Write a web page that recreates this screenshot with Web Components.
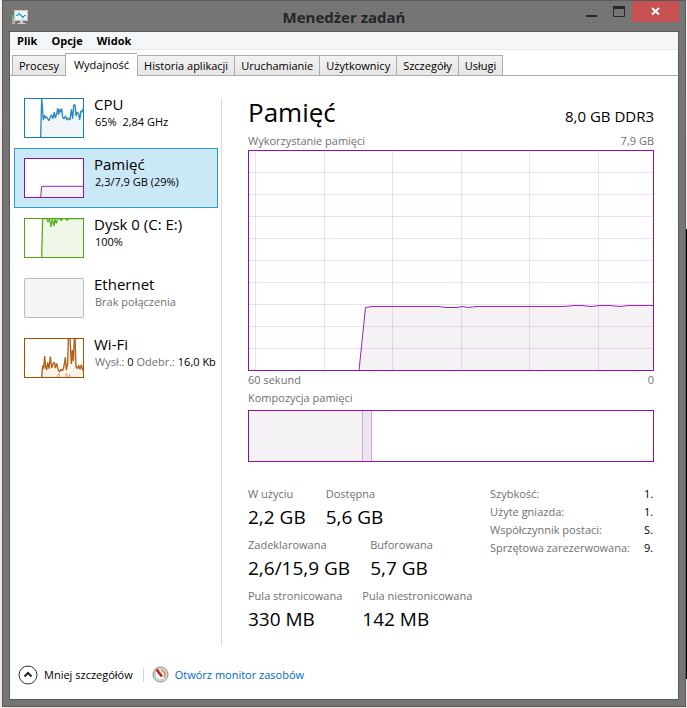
<!DOCTYPE html>
<html lang="pl">
<head>
<meta charset="utf-8">
<title>Menedżer zadań</title>
<style>
  html { height: 100%; }
  body {
    margin: 0; min-height: 100%; display: flex; box-sizing: border-box; padding: 0 1px 1px 2px;
    font-family: "Open Sans", "Noto Sans", sans-serif; font-size: 11px; color: #000;
    background:
      linear-gradient(#000, #000) right 229px / 1px 450px no-repeat fixed,
      linear-gradient(#f7efed, #f3e6e4) fixed;
    background-position: right 0 top 229px, 0 0;
    background-size: 1px 450px, auto;
    background-repeat: no-repeat, repeat;
    --muted: #707070; --accent: #8b12ae; --line: #acacac;
  }
</style>
</head>
<body>
<tm-window>
  <tm-titlebar slot="title">Menedżer zadań</tm-titlebar>
  <tm-menu slot="menu"></tm-menu>
  <tm-tabs slot="tabs">
    <tm-tab>Procesy</tm-tab><tm-tab selected>Wydajność</tm-tab><tm-tab>Historia aplikacji</tm-tab><tm-tab>Uruchamianie</tm-tab><tm-tab>Użytkownicy</tm-tab><tm-tab>Szczegóły</tm-tab><tm-tab>Usługi</tm-tab>
  </tm-tabs>
  <tm-sidebar slot="side">
    <tm-resource kind="cpu">CPU<span slot="sub">65% &nbsp;2,84 GHz</span></tm-resource>
    <tm-resource kind="mem" selected>Pamięć<span slot="sub">2,3/7,9 GB (29%)</span></tm-resource>
    <tm-resource kind="disk">Dysk 0 (C: E:)<span slot="sub">100%</span></tm-resource>
    <tm-resource kind="eth">Ethernet<span slot="sub" style="color:var(--muted)">Brak połączenia</span></tm-resource>
    <tm-resource kind="wifi">Wi-Fi<span slot="sub"><span style="color:var(--muted)">Wysł.:</span> 0 <span style="color:var(--muted)">Odebr.:</span> 16,0 Kb</span></tm-resource>
  </tm-sidebar>
  <tm-memory slot="main"></tm-memory>
  <tm-footer slot="footer"></tm-footer>
</tm-window>

<script>
const define = (name, html, setup) => {
  const tpl = document.createElement('template');
  tpl.innerHTML = html;
  customElements.define(name, class extends HTMLElement {
    constructor() {
      super();
      this.attachShadow({ mode: 'open' }).append(tpl.content.cloneNode(true));
    }
    connectedCallback() { if (setup) setup(this, this.shadowRoot); }
  });
};

define('tm-window', `
<style>
  :host { flex: 1; min-width: 0; display: flex; flex-direction: column; box-sizing: border-box;
    background: #757575; border: 1px solid #5a5a5a; padding: 0 6px 6px; }
  .client { flex: 1; display: flex; flex-direction: column; background: #fff; border: 1px solid #5a5a5a; }
  .body { flex: 1; display: grid; grid-template-columns: 212px minmax(0, 1fr); }
</style>
<slot name="title"></slot>
<div class="client">
  <slot name="menu"></slot>
  <slot name="tabs"></slot>
  <div class="body"><slot name="side"></slot><slot name="main"></slot></div>
  <slot name="footer"></slot>
</div>`);

define('tm-titlebar', `
<style>
  :host { display: grid; grid-template-columns: 1fr auto 1fr; height: 30px; color: #262626; }
  .icon { margin: 8px 0 0 2px; }
  h1 { margin: 0; padding-top: 5px; font-size: 15px; line-height: 22px; font-weight: 700; }
  .controls { display: flex; justify-content: flex-end; align-items: flex-start; }
  button { border: 0; padding: 0; background: none; width: 27px; height: 21px; color: #262626; }
  .close { width: 47px; background: #c75050; color: #fff; }
  svg { display: block; margin: 0 auto; }
  .icon svg { margin: 0; }
</style>
<div class="icon"><svg width="18" height="17" viewBox="0 0 18 17">
  <path d="M1 6h3v9H1z" fill="#b9b9b9"/><path d="M2 7v7" stroke="#8b8b8b"/><path d="M1 7h2" stroke="#1fd32b" stroke-width="2"/>
  <rect x="3.500" y="1.500" width="13" height="10" fill="#e9e9e7" stroke="#c9c9c5"/>
  <rect x="5" y="3" width="10" height="7" fill="#eefaff"/>
  <path d="M5 6.500h1.500l1.500-2 2 2 2 2 1.500-2H15" fill="none" stroke="#2596c9" stroke-width="1.200"/>
  <path d="M9 12h3v2h2l1 1H6l1-1h2z" fill="#cfcfcc"/></svg></div>
<h1><slot></slot></h1>
<div class="controls">
  <button aria-label="Minimalizuj"><svg width="11" height="16" viewBox="0 0 11 16"><path d="M0 11h11v2H0z" fill="#262626"/></svg></button>
  <button aria-label="Maksymalizuj"><svg width="12" height="16" viewBox="0 0 12 16"><path d="M.5 3v9.500h11V3" fill="none" stroke="#262626"/><path d="M0 2h12v3H0z" fill="#262626"/></svg></button>
  <button class="close" aria-label="Zamknij"><svg width="9" height="9" viewBox="0 0 9 9"><path d="M1 1l7 6.500M8 1L1 7.500" stroke="#fff" stroke-width="2"/></svg></button>
</div>`);

define('tm-menu', `
<style>
  :host { display: flex; gap: 14px; padding: 0 7px; height: 17px; background: #f5f6f7; border-bottom: 1px solid #e8e8e8; }
  button { border: 0; padding: 0; background: none; font: 700 11px/18px "Open Sans", "Noto Sans", sans-serif; color: #000; }
</style>
<button>Plik</button><button>Opcje</button><button>Widok</button>`);

define('tm-tabs', `
<style>
  :host { display: flex; align-items: flex-end; height: 26px; padding-left: 2px; background: linear-gradient(var(--line), var(--line)) 0 100% / 100% 1px no-repeat; }
</style>
<slot></slot>`, el => el.setAttribute('role', 'tablist'));

define('tm-tab', `
<style>
  :host { display: block; }
  button { box-sizing: border-box; height: 21px; padding: 0 6px; border: 1px solid var(--line); border-right-width: 0;
    background: linear-gradient(#f2f2f2, #e6e6e6); font: inherit; line-height: 20px; color: #000; display: block; white-space: nowrap; }
  :host(:last-of-type) button { border-right-width: 1px; }
  :host([selected]) button { height: 23px; padding: 0 8px; background: #fff; border-bottom: 0; }
</style>
<button role="tab"><slot></slot></button>`);

define('tm-sidebar', `
<style>
  :host { display: flex; min-width: 0; }
  nav { flex: 1; min-width: 0; padding: 12px 0 0 4px; }
  .rule { width: 1px; margin-top: 22px; background: #dcdcdc; }
</style>
<nav><slot></slot></nav><div class="rule"></div>`);

const graphs = {
  cpu: ['#117dbb', '#f1f6fa', 'M50 118L53 0L58 66L61 52L64 60L67 56L71 62L75 68L79 58L83 50L87 62L91 42L94 60L98 48L101 30L104 50L107 34L110 42L113 32L116 58L120 62L125 54L129 66L133 60L138 66L142 34L146 62L149 22L153 20L156 54L160 42L164 48L167 66L171 38L174 42L178 32'],
  mem: ['#8b12ae', '#f4f2f4', 'M50 118L53 85L178 85'],
  disk: ['#4da60c', '#eff7e9', 'M53 118L56 2L68 2L72 12L77 2L81 27L85 2L90 24L93 2L97 16L101 2L108 2L112 8L115 2L126 2L130 7L133 2L178 2'],
  eth: ['#bcbcbc', '#f4f4f4', ''],
  wifi: ['#a74f01', '#fcf3eb', 'M53 118L56 82L59 92L62 54L65 88L68 96L71 73L75 92L79 56L83 90L87 78L91 72L94 90L98 76L102 94L107 102L111 94L116 98L120 84L124 58L127 96L131 76L133 0L138 0L142 78L145 36L148 70L151 0L153 0L156 86L160 92L164 82L168 94L172 80L175 92L178 98']
};
define('tm-resource', `
<style>
  :host { display: block; }
  button { box-sizing: border-box; width: 204px; height: 60px; padding: 0 0 0 9px; border: 1px solid transparent; background: none;
    display: flex; align-items: center; gap: 10px; font: inherit; color: #000; text-align: left; white-space: nowrap; }
  :host([selected]) button { background: #cbe8f6; border-color: #26a0da; }
  svg { flex: none; display: block; }
  .name { display: block; font-size: 15px; line-height: 17px; }
  .sub { display: block; font-size: 11px; line-height: 17px; padding-left: 1px; }
  .text { padding-bottom: 11px; }
</style>
<button><svg width="60" height="40" viewBox="0 0 180 120"></svg><span class="text"><span class="name"><slot></slot></span><span class="sub"><slot name="sub"></slot></span></span></button>`,
(el, root) => {
  const kind = el.getAttribute('kind');
  const [stroke, fill, d] = graphs[kind];
  root.querySelector('svg').innerHTML =
    `<rect x="1.500" y="1.500" width="177" height="117" fill="${kind === 'eth' ? fill : '#fff'}"/>` +
    (d ? `<path d="${d}V118Z" fill="${fill}"/><path d="${d}" fill="none" stroke="${stroke}" stroke-width="${kind === 'mem' ? 3 : 4}" stroke-linejoin="bevel" stroke-opacity=".9"/>` : '') +
    (kind === 'wifi' ? '<path d="M100 118L104 106L108 118M124 118L128 106L131 118M134 118L137 110L140 118" fill="none" stroke="#f0906a" stroke-width="2.500"/>' : '') +
    `<rect x="1.500" y="1.500" width="177" height="117" rx="${kind === 'eth' ? 2 : 0}" fill="none" stroke="${stroke}" stroke-width="3"/>`;
});

define('tm-usage-chart', `
<style>
  :host { display: block; }
  svg { display: block; width: 100%; height: 221px; box-sizing: border-box; }
</style>
<svg viewBox="0 0 406 221" preserveAspectRatio="none" role="img" aria-label="Wykorzystanie pamięci">
  <path d="M111 220.500L117.500 157.500L124 156.500H191L198 157.500H209L214 156.500L220 157.500L228 156.500H316L326 155.500H334L343 156.500L352 155.500H362L372 156.500L380 155.500H405V220.500Z" fill="#f4f2f4"/>
  <path class="grid" fill="none" stroke="#8b12ae" stroke-opacity=".14"/>
  <path d="M111 220.500L117.500 157.500L124 156.500H191L198 157.500H209L214 156.500L220 157.500L228 156.500H316L326 155.500H334L343 156.500L352 155.500H362L372 156.500L380 155.500H405" fill="none" stroke="#9528b6"/>
  <rect x=".5" y=".5" width="405" height="220" fill="none" stroke="#8b12ae"/>
</svg>`, (el, root) => {
  let d = '';
  for (const x of [7, 76, 144, 213, 281, 350]) d += `M${x + .5} 1V220`;
  for (let y = 22; y < 220; y += 22) d += `M1 ${y + .5}H404`;
  root.querySelector('.grid').setAttribute('d', d);
});

define('tm-composition', `
<style>
  :host { display: flex; box-sizing: border-box; height: 52px; border: 1px solid var(--accent); }
  .used { width: 28%; background: #f4f2f4; }
  .modified { box-sizing: border-box; width: 10px; background: #eee6f2; border: solid #c9a9d4; border-width: 0 1px; }
</style>
<div class="used"></div><div class="modified"></div>`);

define('tm-stat', `
<style>
  :host { display: block; white-space: nowrap; }
  .label { font-size: 11px; line-height: 18px; color: var(--muted); }
  .value { font-size: 19px; line-height: 28px; }
</style>
<div class="label"><slot></slot></div><div class="value"><slot name="value"></slot></div>`);

define('tm-specs', `
<style>
  :host { display: block; }
  table { width: 100%; border-collapse: collapse; font-size: 11px; line-height: 18px; }
  th, td { padding: 0; text-align: left; font-weight: 400; white-space: nowrap; }
  th { color: var(--muted); }
  td { width: 10px; }
</style>
<table>
  <tr><th scope="row">Szybkość:</th><td>1.</td></tr>
  <tr><th scope="row">Użyte gniazda:</th><td>1.</td></tr>
  <tr><th scope="row">Współczynnik postaci:</th><td>S.</td></tr>
  <tr><th scope="row">Sprzętowa zarezerwowana:</th><td>9.</td></tr>
</table>`);

define('tm-memory', `
<style>
  :host { display: block; min-width: 0; padding: 18px 24px 0 26px; }
  header, .caption { display: flex; justify-content: space-between; }
  header { align-items: baseline; height: 38px; }
  h2 { margin: 0; font-size: 26px; line-height: 36px; font-weight: 400; }
  .total { font-size: 15px; }
  .caption { font-size: 11px; line-height: 18px; color: var(--muted); }
  .comp { padding-bottom: 3px; }
  .stats { display: flex; justify-content: space-between; margin-top: 23px; }
  .groups { display: grid; gap: 5px; }
  .row { display: flex; gap: 20px; }
  tm-specs { width: 164px; }
</style>
<header><h2>Pamięć</h2><span class="total">8,0 GB DDR3</span></header>
<div class="caption"><span>Wykorzystanie pamięci</span><span>7,9 GB</span></div>
<tm-usage-chart></tm-usage-chart>
<div class="caption"><span>60 sekund</span><span>0</span></div>
<div class="caption comp"><span>Kompozycja pamięci</span></div>
<tm-composition></tm-composition>
<div class="stats">
  <div class="groups">
    <div class="row"><tm-stat>W użyciu<span slot="value">2,2 GB</span></tm-stat><tm-stat>Dostępna<span slot="value">5,6 GB</span></tm-stat></div>
    <div class="row"><tm-stat>Zadeklarowana<span slot="value">2,6/15,9 GB</span></tm-stat><tm-stat>Buforowana<span slot="value">5,7 GB</span></tm-stat></div>
    <div class="row"><tm-stat>Pula stronicowana<span slot="value">330 MB</span></tm-stat><tm-stat>Pula niestronicowana<span slot="value">142 MB</span></tm-stat></div>
  </div>
  <tm-specs></tm-specs>
</div>`);

define('tm-footer', `
<style>
  :host { display: flex; align-items: center; box-sizing: border-box; height: 53px; padding: 4px 8px 0; line-height: 18px; }
  button { border: 0; padding: 0; background: none; font: inherit; color: #000; }
  button, a { display: flex; align-items: center; gap: 6px; }
  a { color: #0066cc; text-decoration: none; }
  .rule { width: 1px; height: 14px; margin: 0 8px 0 10px; background: #d5d5d5; }
  svg { display: block; }
</style>
<button><svg width="20" height="20" viewBox="0 0 20 20"><circle cx="10" cy="10" r="9" fill="#fff" stroke="#333"/><path d="M6.500 11.500L10 8l3.500 3.500" fill="none" stroke="#222" stroke-width="2"/></svg>Mniej szczegółów</button>
<div class="rule"></div>
<a href="#"><svg width="17" height="17" viewBox="0 0 17 17"><circle cx="8.500" cy="8.500" r="7.500" fill="#d8d8d8" stroke="#8f8f8f"/><circle cx="8.500" cy="8.500" r="5.500" fill="#fafafa" stroke="#bdbdbd"/><path d="M9 4.500a4 4 0 0 1 3 6.500" fill="none" stroke="#e58b3d" stroke-width="1.500"/><path d="M4.500 3.500L10 10.500" stroke="#d01818" stroke-width="2.500"/></svg>Otwórz monitor zasobów</a>`);
</script>
</body>
</html>
